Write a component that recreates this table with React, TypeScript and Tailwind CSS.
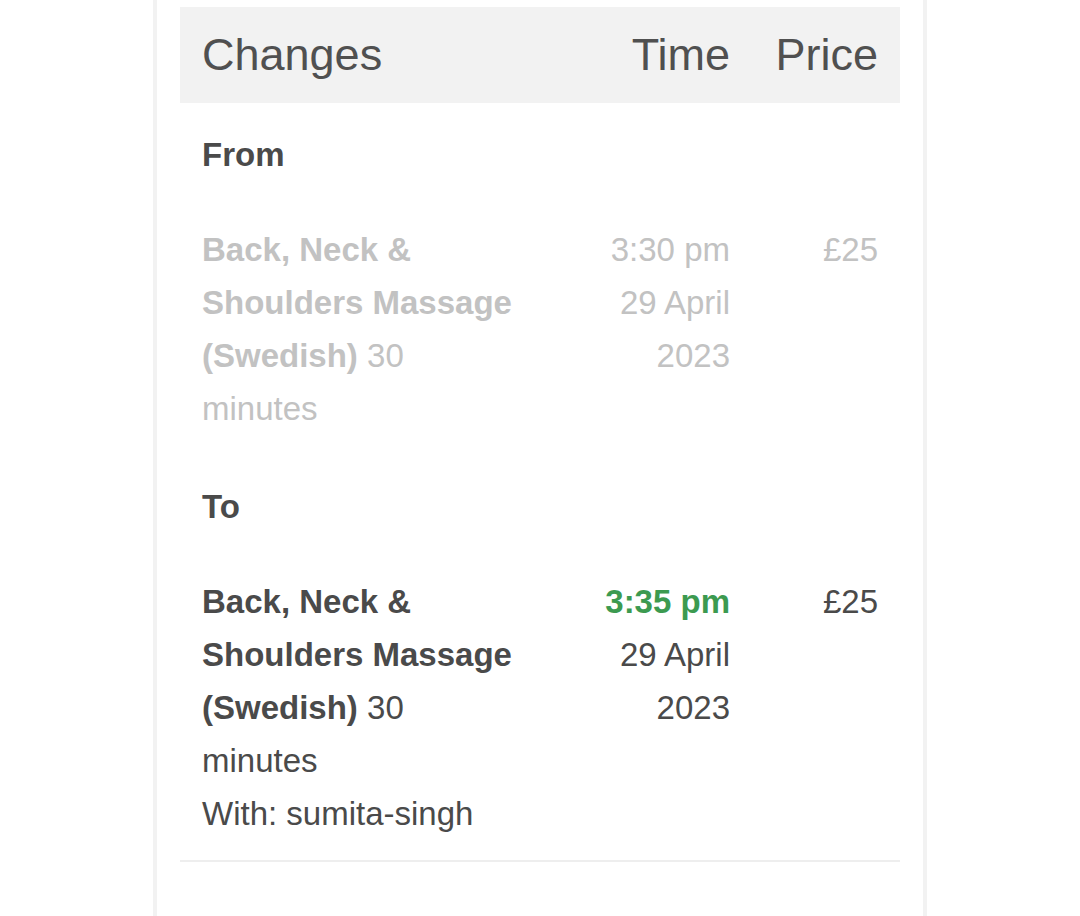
const font = { fontFamily: '"Liberation Sans", Arial, sans-serif' };

type Line = {
  title: string;
  duration: string;
  time: string;
  date: string;
  price: string;
  staff?: string;
  faded?: boolean;
};

const ServiceRow = ({ line, className }: { line: Line; className: string }) => {
  const base = line.faded ? "text-[#c2c2c2]" : "text-[#4a4a4a]";
  const timeColor = line.faded ? "text-[#c2c2c2]" : "text-[#3c9a50] font-bold";
  return (
    <div className={`grid grid-cols-[366px_206px_148px] text-[33px] leading-[53px] ${base} ${className}`}>
      <div className="pl-[22px] pr-[22px]">
        <span className="font-bold">{line.title}</span> {line.duration}
        {line.staff && <div>With: {line.staff}</div>}
      </div>
      <div className="pl-[22px] pr-[22px] text-right">
        <div className={timeColor}>{line.time}</div>
        <div>{line.date}</div>
      </div>
      <div className="pl-[22px] pr-[22px] text-right">{line.price}</div>
    </div>
  );
};

export default function App() {
  const from: Line = {
    title: "Back, Neck & Shoulders Massage (Swedish)",
    duration: "30 minutes",
    time: "3:30 pm",
    date: "29 April 2023",
    price: "£25",
    faded: true,
  };
  const to: Line = {
    title: "Back, Neck & Shoulders Massage (Swedish)",
    duration: "30 minutes",
    time: "3:35 pm",
    date: "29 April 2023",
    price: "£25",
    staff: "sumita-singh",
  };

  return (
    <div className="min-h-[916px] bg-white" style={font}>
      <div className="mx-auto w-[774px] min-h-[916px] border-x-4 border-[#f2f2f2] pt-[7px]">
        <div className="ml-[23px] w-[720px]">
          <div className="grid grid-cols-[366px_206px_148px] h-[96px] items-center bg-[#f2f2f2] text-[45px] text-[#505050]">
            <div className="pl-[22px]">Changes</div>
            <div className="pr-[22px] text-right">Time</div>
            <div className="pr-[22px] text-right">Price</div>
          </div>

          <div className="pt-[25px] pb-[21px] pl-[22px] text-[33px] leading-[53px] font-bold text-[#4a4a4a]">
            From
          </div>
          <ServiceRow line={from} className="pt-[21px] pb-[21px]" />

          <div className="pt-[24px] pb-[21px] pl-[22px] text-[33px] leading-[53px] font-bold text-[#4a4a4a]">
            To
          </div>
          <ServiceRow line={to} className="pt-[21px] pb-[20px] border-b-2 border-[#eeeeee]" />
        </div>
      </div>
    </div>
  );
}
